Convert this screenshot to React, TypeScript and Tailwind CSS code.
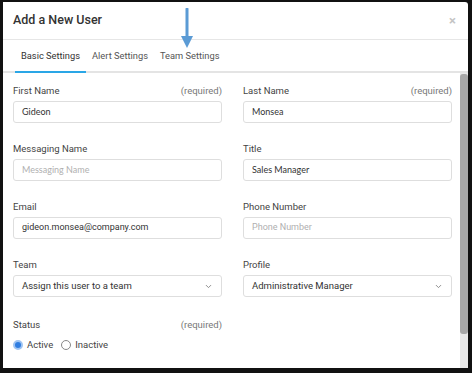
import { ChevronDown } from 'lucide-react'

const roboto = { fontFamily: 'Roboto, "Liberation Sans", sans-serif' }

function Field({
  label,
  required,
  children
}: {
  label: string
  required?: boolean
  children: React.ReactNode
}) {
  return (
    <div className="flex flex-col">
      <div className="flex justify-between h-[14px] text-[9.5px] leading-[14px] text-[#444] mb-[3px]">
        <span>{label}</span>
        {required && <span className="text-[#777]">(required)</span>}
      </div>
      {children}
    </div>
  )
}

function Input({ value, placeholder, lato }: { value?: string; placeholder?: string; lato?: boolean }) {
  return (
    <div
      className="h-[22px] border border-[#dedede] rounded-[3px] px-[8px] flex items-center text-[9px]"
      style={lato ? { fontFamily: 'Lato, "Liberation Sans", sans-serif' } : undefined}
    >
      {value ? <span className="text-[#333]">{value}</span> : <span className="text-[#b0b0b0]">{placeholder}</span>}
    </div>
  )
}

function Select({ value }: { value: string }) {
  return (
    <div className="h-[22px] border border-[#dedede] rounded-[3px] pl-[8px] pr-[8px] flex items-center justify-between text-[9.5px] text-[#333]">
      <span>{value}</span>
      <ChevronDown size={9} strokeWidth={2.5} className="text-[#888]" />
    </div>
  )
}

export default function App() {
  return (
    <div className="w-[472px] h-[373px] bg-[#111] pt-[2px] pl-[3px] pr-[4px] pb-[5px]" style={roboto}>
      <div className="relative w-full h-full bg-white flex flex-col rounded-tr-[3px] overflow-hidden">
        <div className="h-[38px] flex items-center justify-between pl-[10px] pr-[12px] border-b border-[#e6e6e6]">
          <span className="text-[12.5px] font-medium text-[#333]">Add a New User</span>
          <span className="text-[13px] font-bold text-[#c4c4c4] leading-none">×</span>
        </div>
        <div className="h-[33px] flex items-stretch pl-[12px] border-b-2 border-[#e4e4e4] text-[9.3px] whitespace-nowrap">
          <div className="px-[6px] flex items-center text-[#333] border-b-2 border-[#2aa6e6] -mb-[2px]">
            Basic Settings
          </div>
          <div className="px-[6px] flex items-center text-[#555]">Alert Settings</div>
          <div className="px-[6px] flex items-center text-[#555]">Team Settings</div>
        </div>
        <div className="flex-1 flex min-h-0">
          <div className="flex-1 pl-[10px] pr-[8px] pt-[11px]">
            <div className="grid grid-cols-2 gap-x-[21px] gap-y-[19px]">
              <Field label="First Name" required>
                <Input value="Gideon" lato />
              </Field>
              <Field label="Last Name" required>
                <Input value="Monsea" lato />
              </Field>
              <Field label="Messaging Name">
                <Input placeholder="Messaging Name" lato />
              </Field>
              <Field label="Title">
                <Input value="Sales Manager" lato />
              </Field>
              <Field label="Email">
                <Input value="gideon.monsea@company.com" />
              </Field>
              <Field label="Phone Number">
                <Input placeholder="Phone Number" />
              </Field>
              <Field label="Team">
                <Select value="Assign this user to a team" />
              </Field>
              <Field label="Profile">
                <Select value="Administrative Manager" />
              </Field>
            </div>
            <div className="w-[209px] mt-[21px]">
              <div className="flex justify-between h-[14px] text-[9.5px] leading-[14px] text-[#444]">
                <span>Status</span>
                <span className="text-[#777]">(required)</span>
              </div>
              <div className="flex items-center mt-[6px] text-[9.5px] text-[#444]">
                <span className="w-[10px] h-[10px] rounded-full bg-[#2f7de1] border-[2px] border-[#9fc4f2] mr-[4px]" />
                <span className="mr-[8px]">Active</span>
                <span className="w-[10px] h-[10px] rounded-full border border-[#888] mr-[4px]" />
                <span>Inactive</span>
              </div>
            </div>
          </div>
          <div className="w-[8px] bg-[#e9e9e9] flex flex-col">
            <div className="h-[260px] bg-[#a8a8a8] rounded-[3px] mt-[1px]" />
          </div>
        </div>
        <svg className="absolute left-[177px] top-[6px]" width="14" height="42" viewBox="0 0 14 42">
          <line x1="7" y1="1" x2="7" y2="30" stroke="#5b9bd5" strokeWidth="3" strokeLinecap="round" />
          <path d="M1 28 L13 28 L7 40 Z" fill="#5b9bd5" />
        </svg>
      </div>
    </div>
  )
}
